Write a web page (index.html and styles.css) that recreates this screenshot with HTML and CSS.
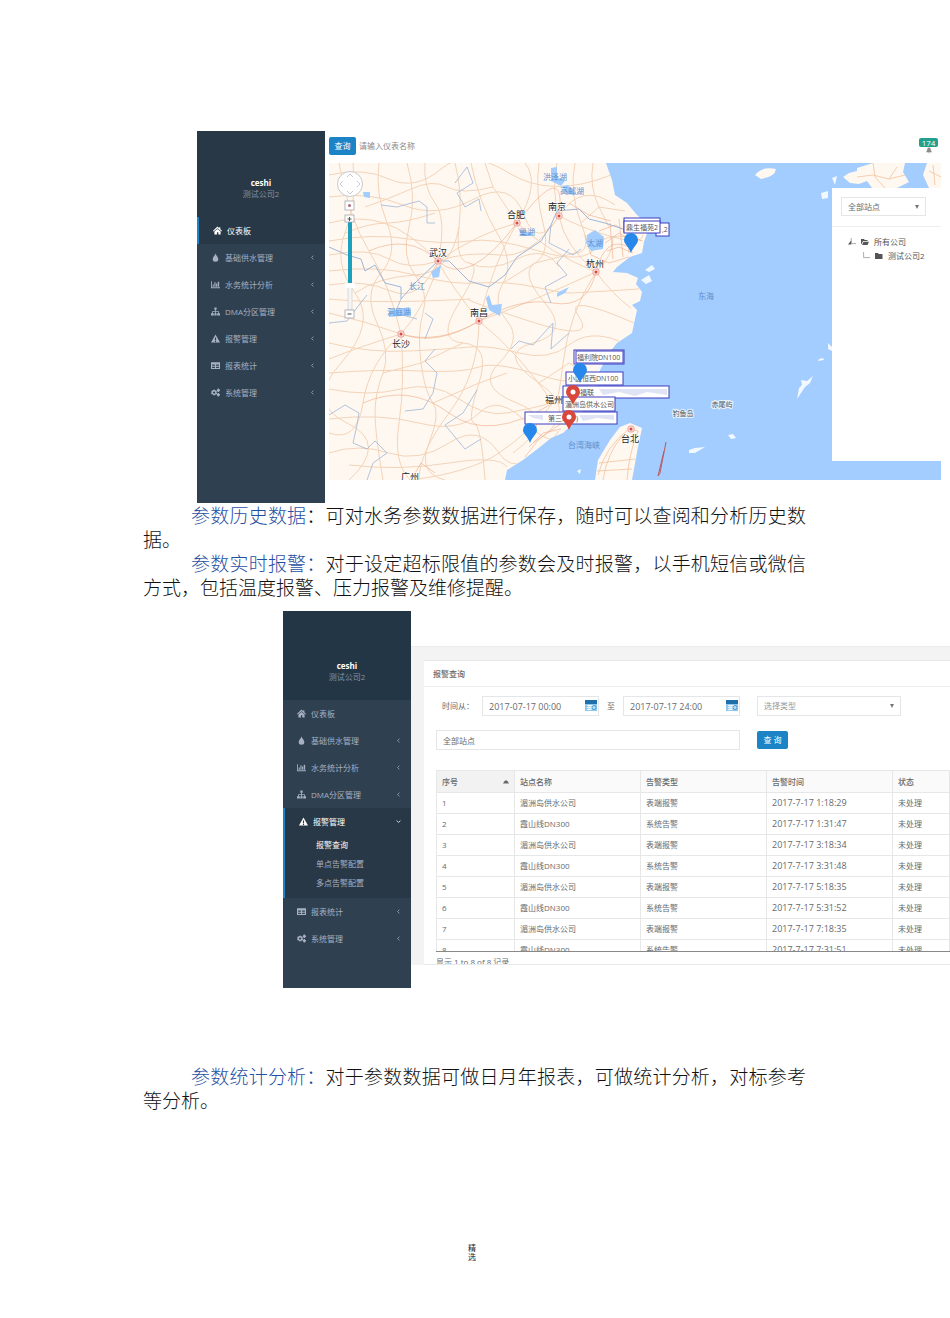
FILE: index.html
```html
<!DOCTYPE html>
<html lang="zh-CN">
<head>
<meta charset="utf-8">
<meta name="viewport" content="width=device-width, initial-scale=1">
<title>水务管理平台</title>
<link rel="stylesheet" href="styles.css">
</head>
<body>
<svg class="defs" aria-hidden="true">
  <symbol id="i-home" viewBox="0 0 16 16"><path d="M8 1 0 8.500l1 1.200L8 4l7 5.700 1-1.200-3-2.600V2h-2v2zM8 5.200 2.500 9.800V15H7v-4h2.500v4h4V9.800z"/></symbol>
  <symbol id="i-drop" viewBox="0 0 16 16"><path d="M8 1c1 4 5 6 5 10a5 4.500 0 0 1-10 0c0-4 4-6 5-10z"/></symbol>
  <symbol id="i-chart" viewBox="0 0 16 16"><path d="M0 2h1.500v11H16v1.500H0zM3 8h2v4H3zM6 4h2v8H6zM9 6h2v6H9zM12 3h2.500v9H12z"/></symbol>
  <symbol id="i-tree" viewBox="0 0 16 16"><path d="M6 1h4v4H8.700v2.500H14V11h2v4h-5v-4h1.600V8.800H8.700V11H10v4H6v-4h1.300V8.800H3.400V11H5v4H0v-4h2V7.500h5.300V5H6z"/></symbol>
  <symbol id="i-warn" viewBox="0 0 16 16"><path fill-rule="evenodd" d="M8 1l8 14H0zM7 6v5h2V6zm0 6v2h2v-2z"/></symbol>
  <symbol id="i-table" viewBox="0 0 16 16"><path fill-rule="evenodd" d="M0 2h16v12H0zM2 6v2.500h5V6zm7 0v2.500h5V6zM2 10v2.500h5V10zm7 0v2.500h5V10z"/></symbol>
  <symbol id="i-cogs" viewBox="0 0 16 16"><path fill-rule="evenodd" d="M4 3h3l.5 1.500L9 4l1.500 2-1 1.500L11 9l-1 2.500-1.700-.2L7.500 13H4l-.8-1.700-1.700.2L0 9l1.300-1.500L.5 6 2 4l1.500.5zM5.500 6a2 2 0 1 0 0 4 2 2 0 0 0 0-4zM12 1h2l.5 1.300L16 3v2l-1.300.6L14 7h-2l-.6-1.400L10.500 5V3l1-.7zM12 9h2l.5 1.300L16 11v2l-1.300.6L14 15h-2l-.6-1.400-.9-.6v-2l1-.7z"/></symbol>
  <symbol id="i-left" viewBox="0 0 16 16"><path d="M11 2 5 8l6 6" fill="none" stroke="currentColor" stroke-width="2.500"/></symbol>
  <symbol id="i-down" viewBox="0 0 16 16"><path d="M2 5l6 6 6-6" fill="none" stroke="currentColor" stroke-width="2.500"/></symbol>
  <symbol id="i-cal" viewBox="0 0 12 11"><path fill="#8fc8ea" d="M0 0h12v11H0z"/><path fill="#1f6fab" d="M0 0h12v4H0z"/><path stroke="#fff" stroke-width=".8" d="M2 5.500h6M2 7.500h5M2 9.500h4M4 5v5M6 5v5"/><circle cx="9" cy="7.500" r="2" fill="#b9e0f6" stroke="#2a83c0" stroke-width=".7"/></symbol>
  <symbol id="i-bell" viewBox="0 0 16 16"><path d="M8 1c4 0 4 4 4.500 7L15 12H1l2.500-4C4 5 4 1 8 1zM6 13h4l-2 2z"/></symbol>
  <symbol id="i-folder" viewBox="0 0 16 16"><path d="M0 2h6l1.500 2H15v10H0z"/></symbol>
  <symbol id="i-open" viewBox="0 0 16 16"><path d="M0 2h6l1.500 2H13v2H4l-3 6H0zM5 7.500h11L13 14H2z"/></symbol>
  <symbol id="pin" viewBox="0 0 14 20"><path d="M7 0a7 7 0 0 1 7 7c0 4-5 7-7 13C5 14 0 11 0 7a7 7 0 0 1 7-7z"/></symbol>
  <symbol id="city" viewBox="0 0 8 8"><rect x="1" y="1" width="6" height="6" rx="2" fill="#fbe3de" stroke="#e98f88" stroke-width=".8"/><circle cx="4" cy="4" r="1.500" fill="#d94840"/></symbol>
</svg>

<main class="page">
  <section class="figure figure-map">
    <aside class="side">
      <div class="user user-map"><strong>ceshi</strong><span>测试公司2</span></div>
      <nav class="menu">
        <a class="on" href="#"><svg><use href="#i-home"/></svg><span>仪表板</span></a>
        <a href="#"><svg><use href="#i-drop"/></svg><span>基础供水管理</span><svg class="arrow"><use href="#i-left"/></svg></a>
        <a href="#"><svg><use href="#i-chart"/></svg><span>水务统计分析</span><svg class="arrow"><use href="#i-left"/></svg></a>
        <a href="#"><svg><use href="#i-tree"/></svg><span>DMA分区管理</span><svg class="arrow"><use href="#i-left"/></svg></a>
        <a href="#"><svg><use href="#i-warn"/></svg><span>报警管理</span><svg class="arrow"><use href="#i-left"/></svg></a>
        <a href="#"><svg><use href="#i-table"/></svg><span>报表统计</span><svg class="arrow"><use href="#i-left"/></svg></a>
        <a href="#"><svg><use href="#i-cogs"/></svg><span>系统管理</span><svg class="arrow"><use href="#i-left"/></svg></a>
      </nav>
    </aside>
    <div class="map-main">
      <header class="search">
        <button class="btn" type="button">查询</button>
        <input type="text" aria-label="仪表名称" placeholder="请输入仪表名称">
        <span class="alerts"><b>174</b><svg><use href="#i-bell"/></svg></span>
      </header>
      <div class="map">
        <svg class="map-canvas" viewBox="0 0 612 317" preserveAspectRatio="xMinYMin slice" role="img" aria-label="站点地图">
          <defs>
            <clipPath id="land"><path d="M0 0H277L283 17 286 32 298 40 308 52 314 57 320 64 315 79 313 90 301 94 288 104 284 109 298 110 309 115 307 121 313 129 311 138 303 142 308 147 303 170 288 180 280 190 271 207 268 224 258 243 248 257 234 270 222 275 211 284 194 297 178 307 176 317H0Z"/></clipPath>
          </defs>
          <rect width="612" height="317" fill="#a3ccff"/>
          <path fill="#fef8f0" d="M0 0H277L283 17 286 32 298 40 308 52 314 57 320 64 315 79 313 90 301 94 288 104 284 109 298 110 309 115 307 121 313 129 311 138 303 142 308 147 303 170 288 180 280 190 271 207 268 224 258 243 248 257 234 270 222 275 211 284 194 297 178 307 176 317H0Z"/>
          <path fill="#fef8f0" d="M266 317 269 297 281 277 291 264 301 260 313 265 309 284 303 317ZM426 12Q433 3 447 6 446 14 432 16ZM514 14 520 10 528 8 528 5 544 0H576L574 9 580 19 568 25H543L538 18 530 21 521 20ZM598 0H612V25H600L594 12Z"/>
          <g fill="#f2f8ff"><path d="M468 236 470 225 473 222 472 217 478 218 484 213 481 220 476 224 472 230ZM490 196 494 195 495 197 489 198ZM499 180 503 184 503 188 499 186ZM492 30 499 28 499 35 493 36ZM503 15 508 13 506 22ZM312 117 320 112 323 118 317 121ZM316 107 323 102 326 106 320 109ZM360 287 366 285 376 284 366 290 360 290ZM399 272 404 271 407 275 402 276ZM268 203 273 202 270 209ZM248 308 252 306 251 311Z"/></g>
          <g clip-path="url(#land)" fill="none">
            <g stroke="#f3d3b8" stroke-width="1">
              <path d="M0 12Q34 4 60 16T112 6 180 10 282 12M0 34Q40 28 74 42T145 36 195 52 230 53 286 42M0 60Q30 52 55 60T109 98Q150 70 188 60M0 92Q40 84 60 96T109 98 170 92 230 53M0 122Q34 116 62 128T109 98M0 150Q36 158 72 171T150 158Q200 140 267 109M72 171Q60 120 40 88T10 0M72 171Q100 140 109 98T106 40 96 0M150 158Q120 120 109 98M150 158Q164 100 188 60T196 0M188 60 164 24 156 0M230 53Q222 24 228 0M230 53Q255 66 284 74T314 72M230 53Q236 84 267 109M267 109Q285 92 284 74M188 60Q220 90 267 109M267 109Q284 132 302 145M267 109Q240 150 234 200T224 240M150 158Q190 190 224 240M150 158Q150 210 120 250T90 317M72 171Q76 220 70 260T81 317M72 171Q40 200 34 240T0 270M0 196Q30 184 72 171M0 226Q40 234 72 226T130 236 178 250 224 240M224 240Q200 270 170 290T81 317M0 290Q30 280 60 290T120 280 170 290 230 268"/>
              <path d="M24 0Q28 40 16 70T26 130 12 200 18 260 20 317M50 0Q46 30 58 60T52 110 48 160 54 210 46 250 54 317M78 0Q88 34 80 64T86 112 94 150 92 200 104 240 100 280 116 317M126 0Q134 30 130 64T140 100 130 140 134 180 150 220 145 260 156 317M142 0Q150 40 168 70T174 120 178 158 170 200 188 240 184 290M210 0Q206 30 214 60T206 100 216 140 204 180 210 220 204 280M246 0Q240 30 252 60T246 90M264 0Q260 24 270 44T280 64M0 78Q44 70 80 76T140 78 210 88 267 84 314 78M0 108Q50 102 86 112T150 120 206 124 240 130 310 126M0 136Q40 140 94 138T140 136 200 158 250 154 305 160M0 180Q40 190 80 188T140 184 190 190 240 182 290 178M0 210Q50 206 92 208T150 204 210 212 266 210M0 256Q50 250 90 260T150 250 200 262 248 256M20 302Q70 308 120 300T178 304M36 44Q60 36 82 26T118 24 164 24M26 130Q50 114 86 112T130 64M140 100Q160 110 188 96T230 104M16 70Q40 60 58 60T106 50M54 210 92 200 134 180M104 240 150 220 178 210M210 220 240 200 268 216M252 60 270 44 296 48M174 120 206 100 246 90"/>
            </g>
            <g stroke="#efaa88" stroke-width=".8" opacity=".75">
              <path d="M40 88Q80 70 109 98T188 60 230 53M72 171Q110 182 150 158T224 140 267 109 300 84M34 240Q80 220 120 250T224 240M270 68 286 62 298 68 312 78M276 80 290 70 300 76M278 88 290 84 304 90M281 60 284 96M290 56 294 94M298 56 300 90M256 72 262 92 280 100 300 94M196 294 210 276 230 262 246 248 256 230M200 284 214 270 232 266M82 317 92 300 106 310M240 40 260 52 282 58"/>
            </g>
            <g stroke="#9fb6d8" stroke-width="1">
              <path d="M0 84 18 92 32 96 36 108 46 102 56 120 72 124 72 136 86 120 109 98 120 98 128 106 140 118 160 124 176 112 188 94 212 78 222 62 228 48 250 46 260 56 276 60 294 66"/>
              <path stroke-width=".8" d="M52 42 68 44 90 38 98 44 98 60 106 60M126 20 138 4 144 20 128 30 136 44 150 36 152 48M0 160 18 158 30 142 38 132M72 136 66 150 88 156M222 62 220 80 244 92 252 86M240 86 228 100 238 112 216 124 222 140M96 176 104 156 96 150M106 186 96 198 108 210 104 230 94 246 76 248M0 252 16 242 30 250 28 262 24 280 38 286 46 278 58 290 44 300 38 317M182 186 190 178 204 182 224 160 222 186 240 170M148 227 134 250 116 262 136 286 152 276"/>
            </g>
            <g fill="#a3ccff"><path d="M258 72 266 67 275 74 274 86 262 88 257 80ZM157 135 160 147 171 153 173 141 163 142 160 132ZM189 64 193 69 202 69 202 73 192 73ZM222 5 228 4 228 14 236 18 232 23 222 18ZM233 23 239 22 248 32 238 31ZM34 29 41 29 41 35 35 34ZM60 148 80 144 82 152 60 154ZM102 109 112 102 110 114 104 115ZM228 130 240 124 236 130 228 134Z"/></g>
          </g>
          <g fill="none" stroke="#f3c39e" stroke-width=".8"><path d="M269 312Q276 284 300 266L309 268Q300 290 298 317M274 317Q278 290 294 272M270 300 306 296M268 308 303 306M528 14 544 12 560 16 576 12M544 0 546 14 556 25M560 16 568 4M600 8 612 14M604 2 606 22"/></g>
          <path d="M337 279 331 310 329 313 335 288" fill="none" stroke="#b85a68"/>

          <g class="water-label">
            <text x="226" y="17">洪泽湖</text><text x="243" y="31">高邮湖</text><text x="198" y="72">巢湖</text><text x="266" y="83">太湖</text><text x="88" y="126">长江</text><text x="70" y="152">洞庭湖</text><text x="377" y="136">东海</text><text x="255" y="285">台湾海峡</text>
          </g>
          <g class="isle-label"><text x="354" y="253">钓鱼岛</text><text x="393" y="244">赤尾屿</text></g>
          <g>
            <use href="#city" x="184" y="56" width="8" height="8"/><use href="#city" x="226" y="49" width="8" height="8"/><use href="#city" x="263" y="105" width="8" height="8"/><use href="#city" x="105" y="94" width="8" height="8"/><use href="#city" x="146" y="154" width="8" height="8"/><use href="#city" x="68" y="167" width="8" height="8"/><use href="#city" x="298" y="262" width="8" height="8"/>
          </g>
          <g class="city-label">
            <text x="187" y="55">合肥</text><text x="228" y="47">南京</text><text x="266" y="104">杭州</text><text x="109" y="93">武汉</text><text x="150" y="153">南昌</text><text x="72" y="184">长沙</text><text x="81" y="317">广州</text><text x="225" y="240">福州</text><text x="301" y="279">台北</text>
          </g>
          <g class="tag">
            <rect x="295" y="55" width="36" height="14"/><rect x="327" y="60" width="13" height="13"/><rect x="295" y="58" width="36" height="12"/>
            <rect x="245" y="187" width="50" height="14"/><rect x="247" y="188" width="47" height="12"/>
            <rect x="237" y="209" width="57" height="13"/>
            <rect x="234" y="223" width="106" height="12"/>
            <rect x="234" y="234" width="52" height="14"/>
            <rect x="196" y="249" width="92" height="12"/>
            <g class="smudge"><path d="M270 226H338V232L318 229 306 233 290 229 274 232ZM199 252H214V257L204 255ZM250 252H285V257L268 255 254 258Z"/></g>
            <text x="297" y="67">鼎生福苑2</text><text x="333" y="69">,2</text>
            <text x="248" y="197">福利院DN100</text><text x="239" y="218">小区恒西DN100</text><text x="251" y="232">福联</text><text x="236" y="244">湄洲岛供水公司</text><text x="219" y="258">第三水厂)</text>
          </g>
          <g fill="#2588ea"><use href="#pin" x="295" y="70" width="14" height="20"/><use href="#pin" x="244" y="200" width="14" height="20"/><use href="#pin" x="194" y="260" width="14" height="20"/></g>
          <g fill="#d9463c"><use href="#pin" x="237" y="222" width="14" height="20"/><use href="#pin" x="233" y="247" width="14" height="20"/></g>
          <g fill="#fff"><circle cx="244" cy="229" r="2.500"/><circle cx="240" cy="254" r="2.500"/></g>

          <g fill="none">
            <circle cx="21" cy="21" r="12.500" fill="#fff" stroke="#c9c9cf"/>
            <path d="M18 14l3-3 3 3M18 28l3 3 3-3M14 18l-3 3 3 3M28 18l3 3-3 3" stroke="#c3c9d6"/>
            <rect x="19" y="121" width="4" height="26" fill="#f4f4f4" stroke="#c8c8c8" stroke-width=".6"/>
            <rect x="19" y="59" width="4" height="62" fill="#1ba1bd"/>
            <g fill="#fff" stroke="#a9a5ae" stroke-width=".8"><rect x="16" y="38" width="9" height="9"/><rect x="16" y="52" width="9" height="7"/><rect x="16" y="147" width="9" height="8"/></g>
            <path d="M18.500 151h4M18.500 56h4M20.500 54v4" stroke="#555"/><circle cx="20.500" cy="42.500" r="1.500" fill="#a56b7c"/>
            <rect x="16" y="120" width="10" height="5" rx="1" fill="#fff"/>
          </g>
        </svg>
        <div class="panel">
          <div class="panel-top"><select aria-label="站点"><option>全部站点</option></select></div>
          <div class="tree">
            <div class="node"><svg class="branch" viewBox="0 0 10 10"><path d="M4 0v7h6" fill="none" stroke="#999"/><path d="M4 3v5H0z"/></svg><svg><use href="#i-open"/></svg><span>所有公司</span></div>
            <div class="node child"><svg class="branch" viewBox="0 0 10 10"><path d="M2 0v7h8" fill="none" stroke="#999"/></svg><svg><use href="#i-folder"/></svg><span>测试公司2</span></div>
          </div>
        </div>
      </div>
    </div>
  </section>

  <section class="copy">
    <p><em>参数历史数据</em>：可对水务参数数据进行保存，随时可以查阅和分析历史数据。</p>
    <p><em>参数实时报警：</em>对于设定超标限值的参数会及时报警，以手机短信或微信方式，包括温度报警、压力报警及维修提醒。</p>
  </section>

  <section class="figure figure-alarm">
    <aside class="side">
      <div class="user user-alarm"><strong>ceshi</strong><span>测试公司2</span></div>
      <nav class="menu">
        <a href="#"><svg><use href="#i-home"/></svg><span>仪表板</span></a>
        <a href="#"><svg><use href="#i-drop"/></svg><span>基础供水管理</span><svg class="arrow"><use href="#i-left"/></svg></a>
        <a href="#"><svg><use href="#i-chart"/></svg><span>水务统计分析</span><svg class="arrow"><use href="#i-left"/></svg></a>
        <a href="#"><svg><use href="#i-tree"/></svg><span>DMA分区管理</span><svg class="arrow"><use href="#i-left"/></svg></a>
        <a class="on" href="#"><svg><use href="#i-warn"/></svg><span>报警管理</span><svg class="arrow"><use href="#i-down"/></svg></a>
        <div class="sub"><a class="current" href="#">报警查询</a><a href="#">单点告警配置</a><a href="#">多点告警配置</a></div>
        <a href="#"><svg><use href="#i-table"/></svg><span>报表统计</span><svg class="arrow"><use href="#i-left"/></svg></a>
        <a href="#"><svg><use href="#i-cogs"/></svg><span>系统管理</span><svg class="arrow"><use href="#i-left"/></svg></a>
      </nav>
    </aside>
    <div class="alarm-main">
      <div class="alarm-body">
        <div class="card">
          <h2>报警查询</h2>
          <form class="filters">
            <div class="range">
              <label for="from">时间从：</label>
              <span class="date"><input id="from" type="text" value="2017-07-17 00:00"><svg><use href="#i-cal"/></svg></span>
              <label for="to">至</label>
              <span class="date"><input id="to" type="text" value="2017-07-17 24:00"><svg><use href="#i-cal"/></svg></span>
            </div>
            <select aria-label="告警类型"><option>选择类型</option></select>
            <input class="station" type="text" aria-label="站点" value="全部站点">
            <button class="btn" type="button">查 询</button>
          </form>
          <div class="table-wrap">
            <table>
              <thead><tr><th class="c-no">序号<svg viewBox="0 0 6 4"><path d="M0 3.500Q3-3 6 3.500z"/></svg></th><th class="c-mid">站点名称</th><th class="c-mid">告警类型</th><th class="c-mid">告警时间</th><th>状态</th></tr></thead>
              <tbody>
                <tr><td>1</td><td>湄洲岛供水公司</td><td>表端报警</td><td class="time">2017-7-17 1:18:29</td><td>未处理</td></tr>
                <tr><td>2</td><td>霞山线DN300</td><td>系统告警</td><td class="time">2017-7-17 1:31:47</td><td>未处理</td></tr>
                <tr><td>3</td><td>湄洲岛供水公司</td><td>表端报警</td><td class="time">2017-7-17 3:18:34</td><td>未处理</td></tr>
                <tr><td>4</td><td>霞山线DN300</td><td>系统告警</td><td class="time">2017-7-17 3:31:48</td><td>未处理</td></tr>
                <tr><td>5</td><td>湄洲岛供水公司</td><td>表端报警</td><td class="time">2017-7-17 5:18:35</td><td>未处理</td></tr>
                <tr><td>6</td><td>霞山线DN300</td><td>系统告警</td><td class="time">2017-7-17 5:31:52</td><td>未处理</td></tr>
                <tr><td>7</td><td>湄洲岛供水公司</td><td>表端报警</td><td class="time">2017-7-17 7:18:35</td><td>未处理</td></tr>
                <tr><td>8</td><td>霞山线DN300</td><td>系统告警</td><td class="time">2017-7-17 7:31:51</td><td>未处理</td></tr>
              </tbody>
            </table>
          </div>
          <div class="count">显示 1 to 8 of 8 记录</div>
        </div>
      </div>
    </div>
  </section>

  <section class="copy copy-last">
    <p><em>参数统计分析：</em>对于参数数据可做日月年报表，可做统计分析，对标参考等分析。</p>
  </section>
  <footer>精<br>选</footer>
</main>
</body>
</html>
```
FILE: styles.css
```css
* { box-sizing: border-box; }
body {
  margin: 0;
  background: #fff;
  color: #676a6c;
  font: 8px/12px "Open Sans", "Noto Sans CJK SC", sans-serif;
}
a { color: inherit; text-decoration: none; }
svg { fill: currentColor; display: block; }
button, input, select { font: inherit; color: inherit; margin: 0; }
.defs { position: absolute; width: 0; height: 0; }
.page { padding: 131px 0 56px; }

.figure { display: grid; grid-template-columns: 128px 1fr; }
.figure-map { margin: 0 9px 0 197px; }
.figure-alarm { margin: 10px 0 0 283px; }

/* sidebar */
.side { background: #2f4050; color: #a7b1c2; }
.user { display: flex; flex-direction: column; align-items: center; line-height: 11px; color: #8592a2; }
.user strong { color: #fff; }
.user-map { height: 86px; padding-top: 46px; background: #293846; }
.user-alarm { height: 89px; padding-top: 49px; background: #233645; }
.menu > a { display: flex; align-items: center; gap: 5px; height: 27px; padding: 0 10px 0 14px; }
.menu svg { width: 9px; height: 9px; }
.menu .arrow { width: 5px; height: 5px; margin-left: auto; }
.menu .on { background: #293846; color: #fff; border-left: 2px solid #1c84c6; }
.figure-alarm .menu { padding-bottom: 36px; }
.figure-map .menu { padding-bottom: 97px; }
.sub { display: flex; flex-direction: column; padding: 0 0 6px 31px; background: #293846; border-left: 2px solid #1c84c6; line-height: 19px; }
.sub .current { color: #fff; }

.btn { border: 0; border-radius: 2px; padding: 0; background: #1c84c6; color: #fff; }

/* map screen */
.map-main { padding-left: 4px; }
.search { display: flex; align-items: center; height: 32px; padding: 0 3px 3px 0; }
.search .btn { width: 27px; height: 18px; }
.search input { flex: 1; border: 0; padding: 0 3px; background: none; outline: 0; }
.search input::placeholder { color: #8a8a8a; opacity: 1; }
.alerts { display: flex; flex-direction: column; align-items: center; color: #8c8c8c; }
.alerts b { width: 19px; border-radius: 2px; background: #23a08c; color: #fff; font-weight: 400; line-height: 9px; text-align: center; }
.alerts svg { width: 8px; height: 7px; }
.map { position: relative; }
.map-canvas { width: 100%; height: 317px; }
.map-canvas text { font-size: 8px; text-anchor: middle; }
.water-label { fill: #5d8fcb; }
.isle-label { fill: #4a5666; stroke: #e8f0fa; stroke-width: 2px; paint-order: stroke; }
.map-canvas .isle-label text { font-size: 7px; }
.city-label { fill: #222; stroke: #fff; stroke-width: 1px; paint-order: stroke; }
.map-canvas .city-label text { font-size: 9px; }
.tag rect { fill: #fff; stroke: #3c3cc0; }
.tag text { fill: #555; }
.map-canvas .tag text { text-anchor: start; font-size: 7px; }
.tag .smudge { fill: #dfe3f4; }
.panel { position: absolute; top: 25px; right: 0; width: 109px; height: 273px; background: #fff; }
.panel-top { padding: 9px 15px 10px 9px; border-bottom: 1px solid #eee; }
select {
  appearance: none;
  border: 1px solid #e5e6e7;
  border-radius: 0;
  padding: 0 6px;
  background: #fff url("data:image/svg+xml,%3Csvg xmlns='http://www.w3.org/2000/svg' viewBox='0 0 4 4'%3E%3Cpath d='M0 0h4L2 4z' fill='%23777'/%3E%3C/svg%3E") no-repeat right 6px center / 4px 4px;
}
.panel select { display: block; width: 100%; height: 19px; }
.tree { padding: 8px 0 0 16px; color: #555; }
.node { display: flex; align-items: center; gap: 5px; height: 14px; }
.node svg { width: 8px; height: 8px; }
.child { padding-left: 14px; }

/* document text */
.copy {
  padding: 2px 144px 0 143px;
  color: #111;
  font: 300 19px/24px "Liberation Sans", "Noto Sans CJK SC", sans-serif;
  text-align: justify;
}
.copy p { margin: 0; text-indent: 48px; }
.copy em { color: #1f4fa3; font-style: normal; }
.copy-last { padding-top: 78px; }

/* alarm screen */
.alarm-main { padding-top: 35px; min-width: 0; }
.alarm-body { padding: 13px 0 0 13px; background: #f3f3f4; border-top: 1px solid #ececec; }
.card { background: #fff; border-top: 1px solid #e7eaec; border-bottom: 1px solid #e7eaec; }
.card h2 { margin: 0; height: 26px; padding-left: 9px; border-bottom: 1px solid #eee; font-size: 8px; line-height: 26px; font-weight: 500; }
.filters { display: grid; grid-template-columns: 304px 144px; justify-content: start; align-items: center; gap: 14px 17px; padding: 9px 0 20px 12px; }
.filters input, .filters select { height: 20px; border: 1px solid #e5e6e7; padding: 0 6px; background-color: #fff; outline: 0; }
.filters select { color: #999; width: 100%; }
.filters input { width: 100%; }
.filters .btn { width: 31px; height: 18px; }
.range { display: grid; grid-template-columns: 32px 117px 8px 117px; justify-content: end; gap: 8px; }
.range label { align-self: center; white-space: nowrap; }
.date { position: relative; }
.date input { font-size: 9px; }
.date svg { position: absolute; right: 2px; top: 4px; width: 12px; height: 11px; }
.table-wrap { height: 182px; margin-left: 12px; overflow: hidden; border-bottom: 1px solid #888; }
table { width: 100%; table-layout: fixed; border-collapse: collapse; }
th, td { height: 21px; padding: 0 5px; border: 1px solid #e7e7e7; text-align: left; font-weight: 400; white-space: nowrap; }
th { height: 22px; font-weight: 500; background: #fafafa; }
th:first-child { background: #f2f2f3; }
th svg { float: right; width: 6px; height: 4px; margin-top: 4px; }
.c-no { width: 78px; }
.c-mid { width: 126px; }
.time { font-size: 9px; }
.count { height: 12px; margin-left: 12px; overflow: hidden; line-height: 20px; }

footer { margin-top: 129px; padding-right: 6px; color: #222; font: 8px/9px "Noto Sans CJK SC", sans-serif; text-align: center; }
```
